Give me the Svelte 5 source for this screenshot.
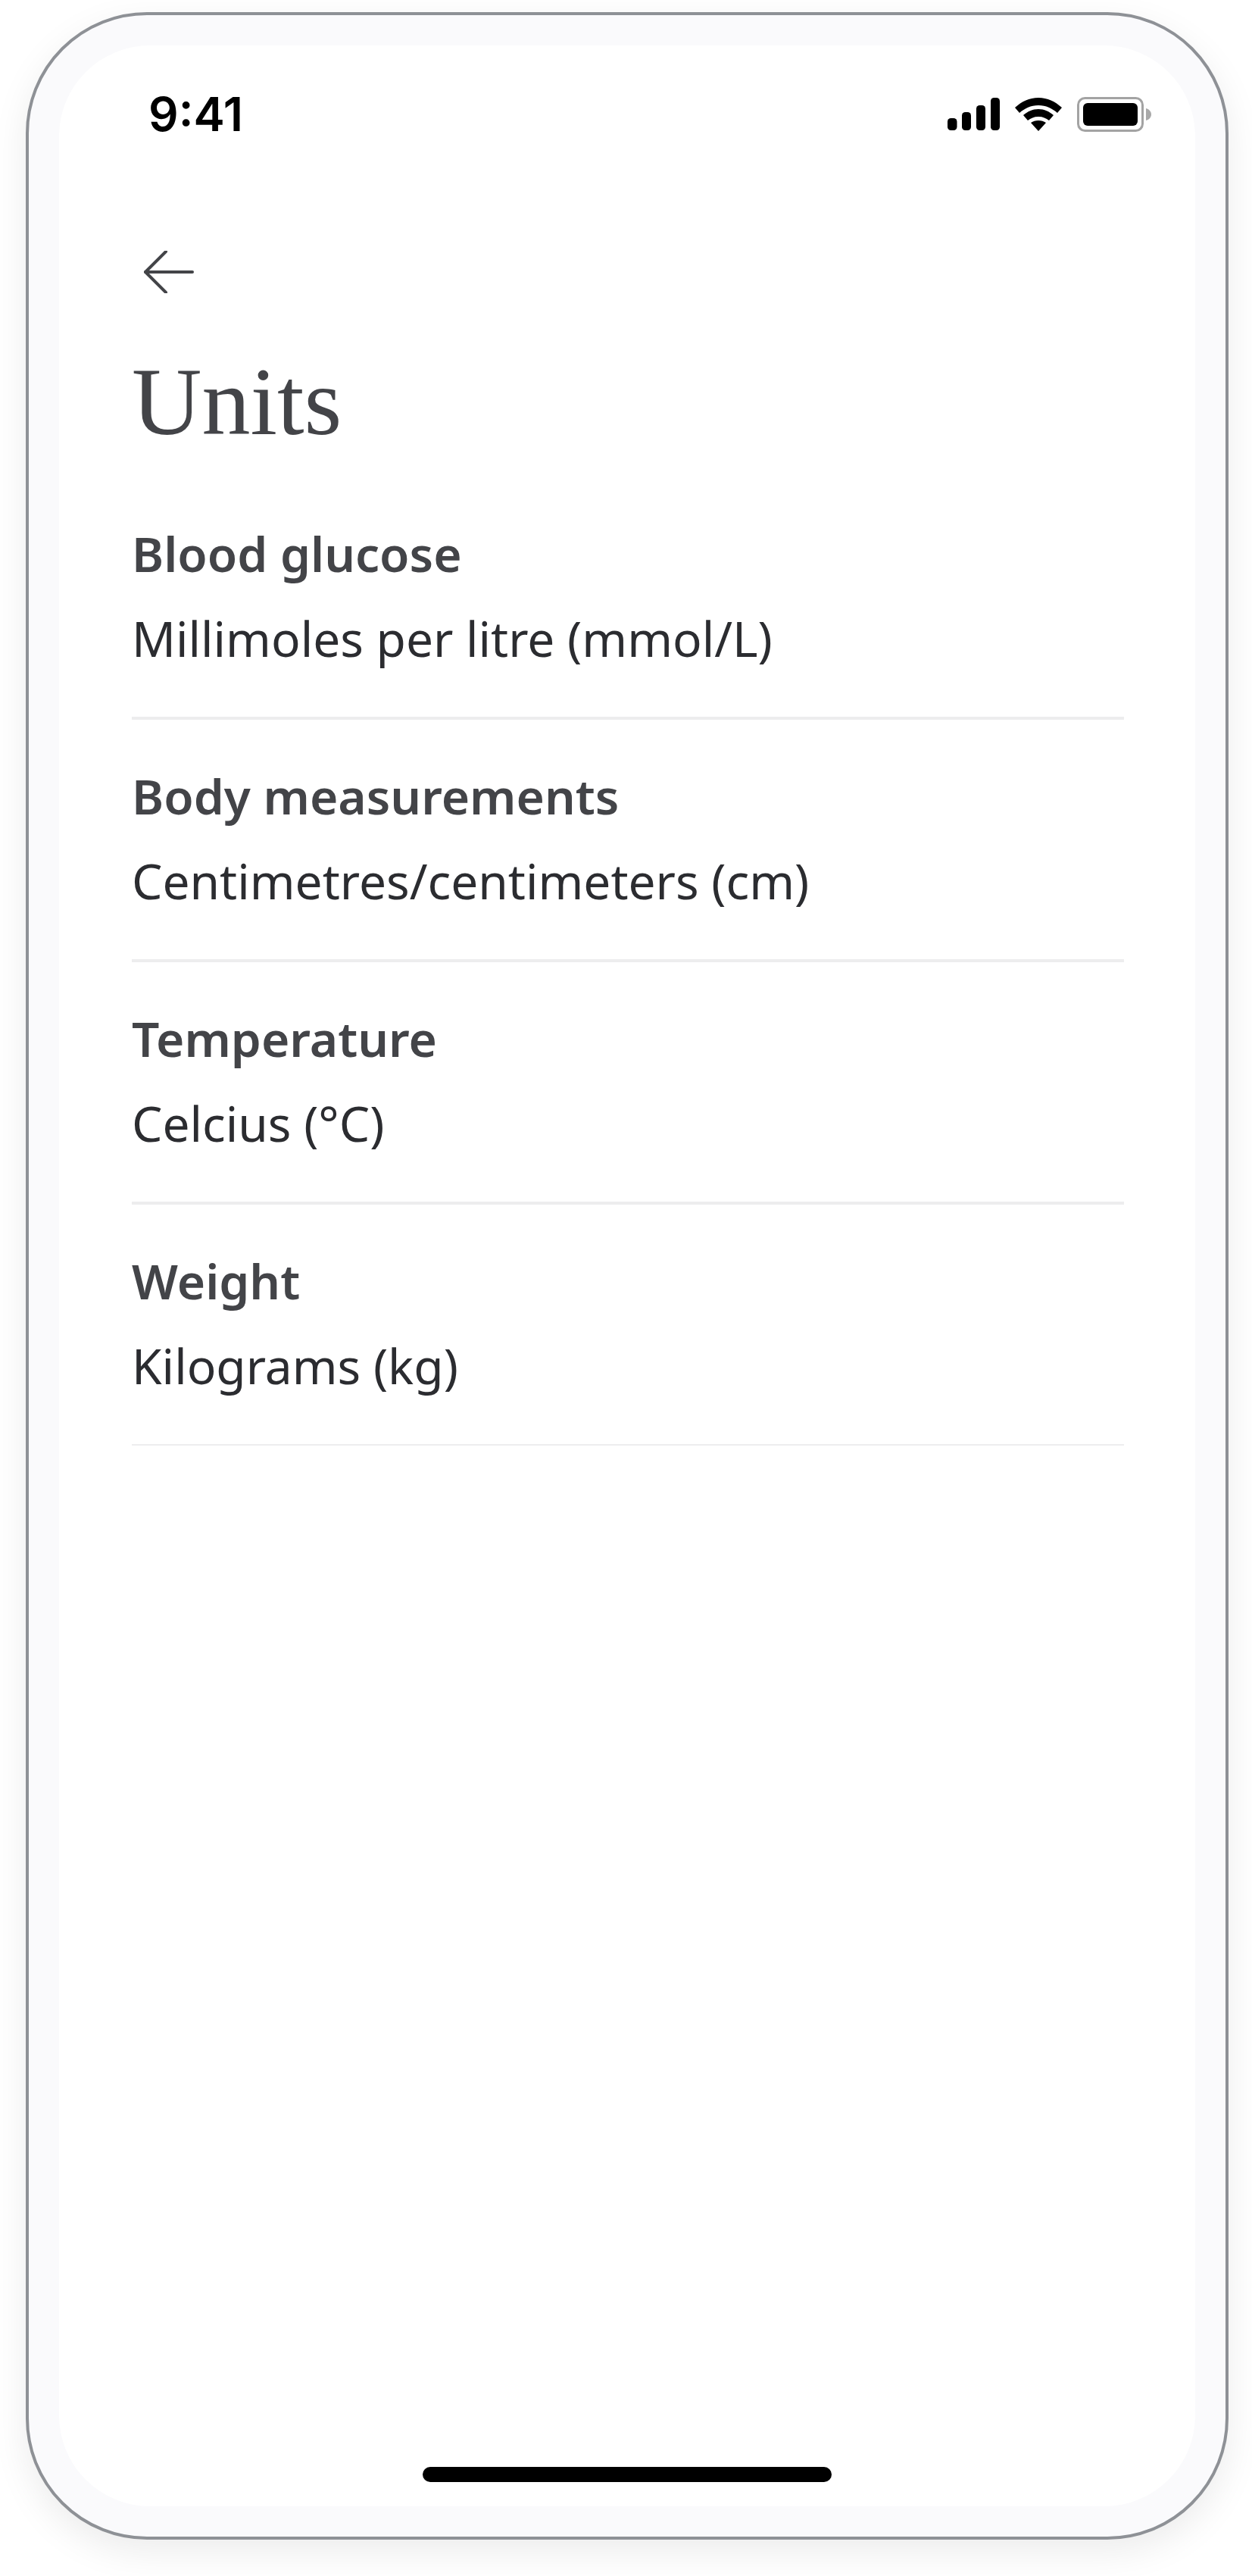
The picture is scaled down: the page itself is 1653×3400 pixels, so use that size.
<script>
  const units = [
    { name: 'Blood glucose', value: 'Millimoles per litre (mmol/L)' },
    { name: 'Body measurements', value: 'Centimetres/centimeters (cm)' },
    { name: 'Temperature', value: 'Celcius (°C)' },
    { name: 'Weight', value: 'Kilograms (kg)' }
  ];
</script>

<div class="page">
  <div class="phone">
    <div class="screen">
      <div class="status-bar">
        <span class="time">9:41</span>
        <div class="status-icons">
          <svg class="signal" width="69" height="44" viewBox="0 0 69 44" aria-hidden="true">
            <rect x="0" y="27" width="12.5" height="16" rx="4.5" />
            <rect x="19" y="19" width="12" height="24" rx="4.5" />
            <rect x="38" y="10" width="12" height="33" rx="4.5" />
            <rect x="57" y="0" width="12" height="43" rx="4.5" />
          </svg>
          <svg class="wifi" width="62" height="44" viewBox="0 0 62 44" aria-hidden="true">
            <path d="M31 0C19 0 9 5 0 13l6 7c7-6 15-10 25-10s18 4 25 10l6-7C53 5 43 0 31 0z" />
            <path d="M31 15c-8 0-14 3-20 8l6 7c4-3 8-5 14-5s10 2 14 5l6-7c-6-5-12-8-20-8z" />
            <path d="M31 30c-4 0-7 1-10 3l10 11 10-11c-3-2-6-3-10-3z" />
          </svg>
          <svg class="battery" width="98" height="46" viewBox="0 0 98 46" aria-hidden="true">
            <rect x="1.5" y="1.5" width="85" height="43" rx="9" fill="none" stroke="#a3a3a3" stroke-width="3" />
            <rect x="8" y="8" width="72" height="30" rx="6" />
            <path d="M91 15c4 1 7 4 7 8s-3 7-7 8z" fill="#a9a9a9" />
          </svg>
        </div>
      </div>

      <main class="content">
        <button class="back" type="button" aria-label="Back">
          <svg width="68" height="56" viewBox="0 0 68 56" fill="none" stroke="#434448" stroke-width="4" stroke-linecap="round" stroke-linejoin="round" aria-hidden="true">
            <path d="M2 28h62" />
            <path d="M29 1L2 28l27 27" />
          </svg>
        </button>
        <h1 class="title">Units</h1>

        <ul class="list">
          {#each units as unit}
            <li class="row">
              <div class="name">{unit.name}</div>
              <div class="value">{unit.value}</div>
            </li>
          {/each}
        </ul>
      </main>

      <div class="home-indicator"></div>
    </div>
  </div>
</div>

<style>
  :global(body) {
    margin: 0;
    background: #fff;
  }

  .page {
    width: 1653px;
    height: 3400px;
    padding: 16px 31px 48px 34px;
    box-sizing: border-box;
  }

  .phone {
    height: 100%;
    box-sizing: border-box;
    border: 4px solid #8e9196;
    border-radius: 160px;
    background: #fafafc;
    padding: 40px;
    box-shadow: 0 16px 48px rgba(0, 0, 0, 0.08);
  }

  .screen {
    height: 100%;
    background: #fff;
    border-radius: 120px;
    display: flex;
    flex-direction: column;
  }

  .status-bar {
    display: flex;
    align-items: center;
    justify-content: space-between;
    padding: 58px 58px 0 118px;
    height: 66px;
  }

  .time {
    font-family: Inter, "Liberation Sans", sans-serif;
    font-weight: 600;
    font-size: 62px;
    color: #000;
    line-height: 60px;
  }

  .status-icons {
    display: flex;
    align-items: center;
    gap: 20px;
  }

  .status-icons svg {
    display: block;
    fill: #000;
  }

  .content {
    flex: 1;
    min-height: 0;
    padding: 147px 94px 0 96px;
  }

  .back {
    display: block;
    padding: 0;
    margin: 0 0 0 16px;
    border: none;
    background: none;
    cursor: pointer;
  }

  .back svg {
    display: block;
  }

  .title {
    margin: 73px 0 0;
    font-family: "Liberation Serif", serif;
    font-weight: 400;
    font-size: 128px;
    line-height: 140px;
    color: #434448;
  }

  .list {
    list-style: none;
    margin: 30px 0 0;
    padding: 0;
  }

  .row {
    height: 320px;
    box-sizing: border-box;
    padding-top: 57px;
    border-bottom: 4px solid #ededee;
  }

  .row:last-child {
    height: 318px;
    border-bottom-width: 2px;
  }

  .name {
    font-family: "Noto Sans", sans-serif;
    font-weight: 600;
    font-size: 64px;
    line-height: 88px;
    color: #434448;
  }

  .value {
    margin-top: 24px;
    font-family: "Noto Sans", sans-serif;
    font-weight: 400;
    font-size: 64px;
    line-height: 88px;
    color: #2b2c30;
  }

  .home-indicator {
    align-self: center;
    width: 540px;
    height: 20px;
    border-radius: 10px;
    background: #000;
    margin-bottom: 32px;
  }
</style>
